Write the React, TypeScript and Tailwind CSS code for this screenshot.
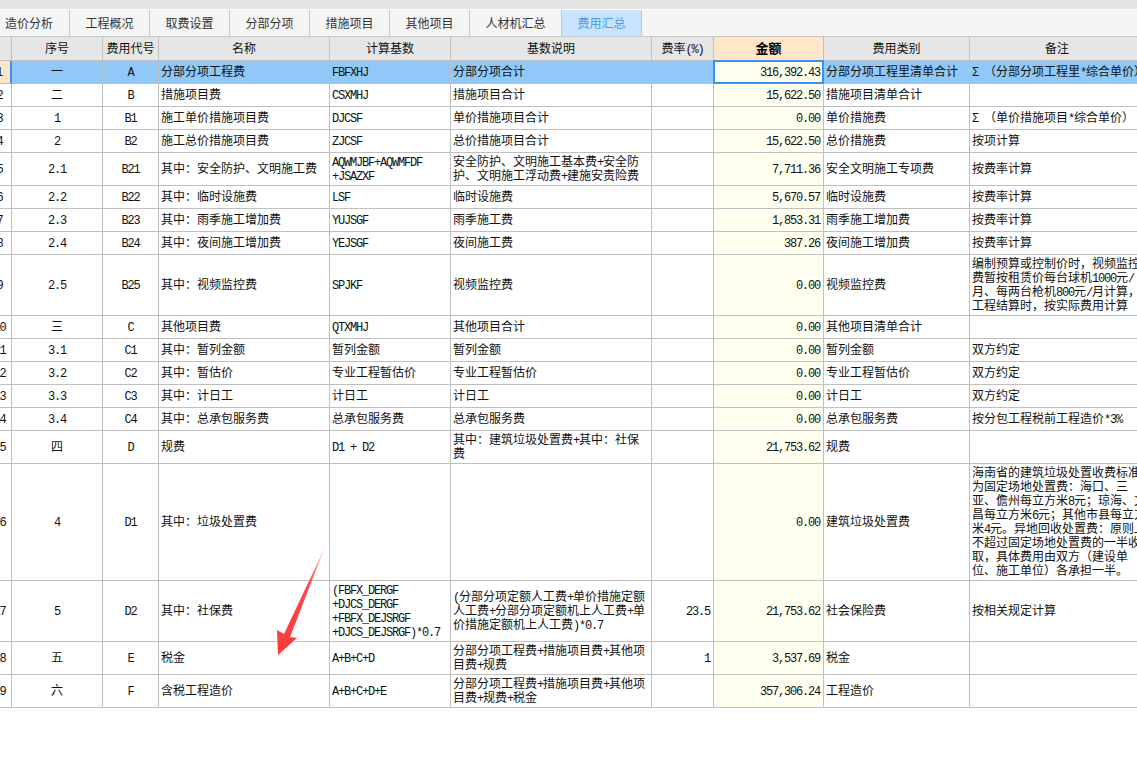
const tabs = ["工程概况", "取费设置", "分部分项", "措施项目", "其他项目"];

const headers = ["", "序号", "费用代号", "名称", "计算基数", "基数说明", "费率(%)", "金额", "费用类别", "备注"];

type Row = {
  h: string;
  no: string;
  seq: string;
  code: string;
  name: string;
  base: string;
  desc: string;
  rate?: string;
  amount: string;
  kind: string;
  note?: string;
};

const rows: Row[] = [
  { h: "h-[23px]", no: "1", seq: "一", code: "A", name: "分部分项工程费", base: "FBFXHJ", desc: "分部分项合计", amount: "316,392.43", kind: "分部分项工程里清单合计", note: "Σ（分部分项工程里*综合单价）" },
  { h: "h-[23px]", no: "2", seq: "二", code: "B", name: "措施项目费", base: "CSXMHJ", desc: "措施项目合计", amount: "15,622.50", kind: "措施项目清单合计" },
  { h: "h-[23px]", no: "3", seq: "1", code: "B1", name: "施工单价措施项目费", base: "DJCSF", desc: "单价措施项目合计", amount: "0.00", kind: "单价措施费", note: "Σ（单价措施项目*综合单价）" },
  { h: "h-[23px]", no: "4", seq: "2", code: "B2", name: "施工总价措施项目费", base: "ZJCSF", desc: "总价措施项目合计", amount: "15,622.50", kind: "总价措施费", note: "按项计算" },
  { h: "h-[33px]", no: "5", seq: "2.1", code: "B21", name: "其中：安全防护、文明施工费", base: "AQWMJBF+AQWMFDF\n+JSAZXF", desc: "安全防护、文明施工基本费+安全防\n护、文明施工浮动费+建施安责险费", amount: "7,711.36", kind: "安全文明施工专项费", note: "按费率计算" },
  { h: "h-[23px]", no: "6", seq: "2.2", code: "B22", name: "其中：临时设施费", base: "LSF", desc: "临时设施费", amount: "5,670.57", kind: "临时设施费", note: "按费率计算" },
  { h: "h-[23px]", no: "7", seq: "2.3", code: "B23", name: "其中：雨季施工增加费", base: "YUJSGF", desc: "雨季施工费", amount: "1,853.31", kind: "雨季施工增加费", note: "按费率计算" },
  { h: "h-[23px]", no: "8", seq: "2.4", code: "B24", name: "其中：夜间施工增加费", base: "YEJSGF", desc: "夜间施工费", amount: "387.26", kind: "夜间施工增加费", note: "按费率计算" },
  { h: "h-[61px]", no: "9", seq: "2.5", code: "B25", name: "其中：视频监控费", base: "SPJKF", desc: "视频监控费", amount: "0.00", kind: "视频监控费", note: "编制预算或控制价时，视频监控\n费暂按租赁价每台球机1000元/\n月、每两台枪机800元/月计算，\n工程结算时，按实际费用计算" },
  { h: "h-[23px]", no: "10", seq: "三", code: "C", name: "其他项目费", base: "QTXMHJ", desc: "其他项目合计", amount: "0.00", kind: "其他项目清单合计" },
  { h: "h-[23px]", no: "11", seq: "3.1", code: "C1", name: "其中：暂列金额", base: "暂列金额", desc: "暂列金额", amount: "0.00", kind: "暂列金额", note: "双方约定" },
  { h: "h-[23px]", no: "12", seq: "3.2", code: "C2", name: "其中：暂估价", base: "专业工程暂估价", desc: "专业工程暂估价", amount: "0.00", kind: "专业工程暂估价", note: "双方约定" },
  { h: "h-[23px]", no: "13", seq: "3.3", code: "C3", name: "其中：计日工", base: "计日工", desc: "计日工", amount: "0.00", kind: "计日工", note: "双方约定" },
  { h: "h-[23px]", no: "14", seq: "3.4", code: "C4", name: "其中：总承包服务费", base: "总承包服务费", desc: "总承包服务费", amount: "0.00", kind: "总承包服务费", note: "按分包工程税前工程造价*3%" },
  { h: "h-[33px]", no: "15", seq: "四", code: "D", name: "规费", base: "D1 + D2", desc: "其中：建筑垃圾处置费+其中：社保\n费", amount: "21,753.62", kind: "规费" },
  { h: "h-[117px]", no: "16", seq: "4", code: "D1", name: "其中：垃圾处置费", base: "", desc: "", amount: "0.00", kind: "建筑垃圾处置费", note: "海南省的建筑垃圾处置收费标准\n为固定场地处置费：海口、三\n亚、儋州每立方米8元；琼海、文\n昌每立方米6元；其他市县每立方\n米4元。异地回收处置费：原则上\n不超过固定场地处置费的一半收\n取，具体费用由双方（建设单\n位、施工单位）各承担一半。" },
  { h: "h-[61px]", no: "17", seq: "5", code: "D2", name: "其中：社保费", base: "(FBFX_DERGF\n+DJCS_DERGF\n+FBFX_DEJSRGF\n+DJCS_DEJSRGF)*0.7", desc: "(分部分项定额人工费+单价措施定额\n人工费+分部分项定额机上人工费+单\n价措施定额机上人工费)*0.7", rate: "23.5", amount: "21,753.62", kind: "社会保险费", note: "按相关规定计算" },
  { h: "h-[33px]", no: "18", seq: "五", code: "E", name: "税金", base: "A+B+C+D", desc: "分部分项工程费+措施项目费+其他项\n目费+规费", rate: "1", amount: "3,537.69", kind: "税金" },
  { h: "h-[33px]", no: "19", seq: "六", code: "F", name: "含税工程造价", base: "A+B+C+D+E", desc: "分部分项工程费+措施项目费+其他项\n目费+规费+税金", amount: "357,306.24", kind: "工程造价" },
];

// ascii runs are half width in the original grid font, so squeeze the mono font down to 6px a char
function Txt({ value }: { value?: string }) {
  if (!value) return null;
  return (
    <>
      {value.split("\n").map((line, i) => (
        <div key={i} className="h-[14px] leading-[14px]">
          {line.split(/([\x20-\x7e]+|Σ)/).map((part, j) => {
            if (part === "Σ") {
              return (
                <span key={j} className="inline-block w-[12px]">
                  {part}
                </span>
              );
            }
            return j % 2 === 1 ? (
              <span key={j} className="font-['Liberation_Mono',monospace] tracking-[-1.2px]">
                {part}
              </span>
            ) : (
              part
            );
          })}
        </div>
      ))}
    </>
  );
}

const cell = "border-r border-b border-[#c0c0c0] whitespace-nowrap pt-0 pb-[2px]";

export default function App() {
  return (
    <div className="relative h-[782px] w-[1137px] overflow-hidden bg-white font-['Noto_Sans_CJK_SC',sans-serif] text-[12px] leading-[14px] text-[#111]">
      {/* top strip */}
      <div className="h-[9px] bg-[#e3e3e3]" />
      <div className="h-px bg-white" />

      {/* tabs */}
      <div className="flex h-[27px] border-b border-[#c8c8c8] bg-[#f5f5f5]">
        <div className="flex w-[70px] items-center border-r border-[#c8c8c8] pl-[5px] text-[#333]">造价分析</div>
        {tabs.map((t) => (
          <div key={t} className="flex w-[80px] items-center justify-center border-r border-[#c8c8c8] text-[#333]">
            {t}
          </div>
        ))}
        <div className="flex w-[92px] items-center justify-center border-r border-[#c8c8c8] text-[#333]">人材机汇总</div>
        <div className="flex w-[80px] items-center justify-center border-r border-[#c8c8c8] bg-[#c8e4fc] text-[#4a9bf0]">
          费用汇总
        </div>
      </div>

      {/* fee grid, scrolled a little to the right so the row numbers are cut */}
      <table className="-ml-[12px] w-[1157px] table-fixed border-separate border-spacing-0">
        <colgroup>
          <col className="w-[24px]" />
          <col className="w-[91px]" />
          <col className="w-[56px]" />
          <col className="w-[171px]" />
          <col className="w-[121px]" />
          <col className="w-[201px]" />
          <col className="w-[62px]" />
          <col className="w-[110px]" />
          <col className="w-[146px]" />
          <col className="w-[175px]" />
        </colgroup>
        <thead>
          <tr className="h-[24px]">
            {headers.map((h, i) => (
              <th
                key={i}
                className={`${cell} text-center ${
                  i === 7 ? "bg-[#ffe6c8] text-[13px] font-bold text-black" : "bg-[#e6e6e6] font-normal"
                }`}
              >
                <Txt value={h} />
              </th>
            ))}
          </tr>
        </thead>
        <tbody>
          {rows.map((r, i) => {
            const sel = i === 0;
            const bg = sel ? "bg-[#90c8f8]" : "bg-white";
            return (
              <tr key={r.no} className={r.h}>
                <td className={`${cell} text-center ${sel ? "border-r-2 border-r-[#3e90f0] bg-[#ffe6c8]" : "bg-white"}`}>
                  <Txt value={r.no} />
                </td>
                <td className={`${cell} text-center ${bg}`}>
                  <Txt value={r.seq} />
                </td>
                <td className={`${cell} text-center ${bg}`}>
                  <Txt value={r.code} />
                </td>
                <td className={`${cell} pl-[2px] ${bg}`}>
                  <Txt value={r.name} />
                </td>
                <td className={`${cell} pl-[2px] ${bg}`}>
                  <Txt value={r.base} />
                </td>
                <td className={`${cell} pl-[2px] ${bg}`}>
                  <Txt value={r.desc} />
                </td>
                <td className={`${cell} pr-[3px] text-right ${bg}`}>
                  <Txt value={r.rate} />
                </td>
                <td className={`${cell} relative pr-[3px] text-right bg-[#fffff0]`}>
                  <Txt value={r.amount} />
                  {/* current cell frame */}
                  {sel && <div className="absolute -top-px -right-px -bottom-px -left-px border-2 border-[#3e90f0]" />}
                </td>
                <td className={`${cell} pl-[2px] ${bg}`}>
                  <Txt value={r.kind} />
                </td>
                <td className={`${cell} pl-[2px] ${bg}`}>
                  <Txt value={r.note} />
                </td>
              </tr>
            );
          })}
        </tbody>
      </table>

      {/* red annotation arrow pasted on the screenshot */}
      <svg className="absolute left-[270px] top-[540px]" width="60" height="120" viewBox="270 540 60 120">
        <defs>
          <linearGradient id="arrowFade" x1="0" y1="0" x2="0" y2="1">
            <stop offset="0" stopColor="#ffc4c4" />
            <stop offset="0.35" stopColor="#ff4a4a" />
            <stop offset="1" stopColor="#fb3838" />
          </linearGradient>
        </defs>
        <polygon points="325,547 290,637 297,638 278,655 277,630 284,634" fill="url(#arrowFade)" />
      </svg>
    </div>
  );
}
